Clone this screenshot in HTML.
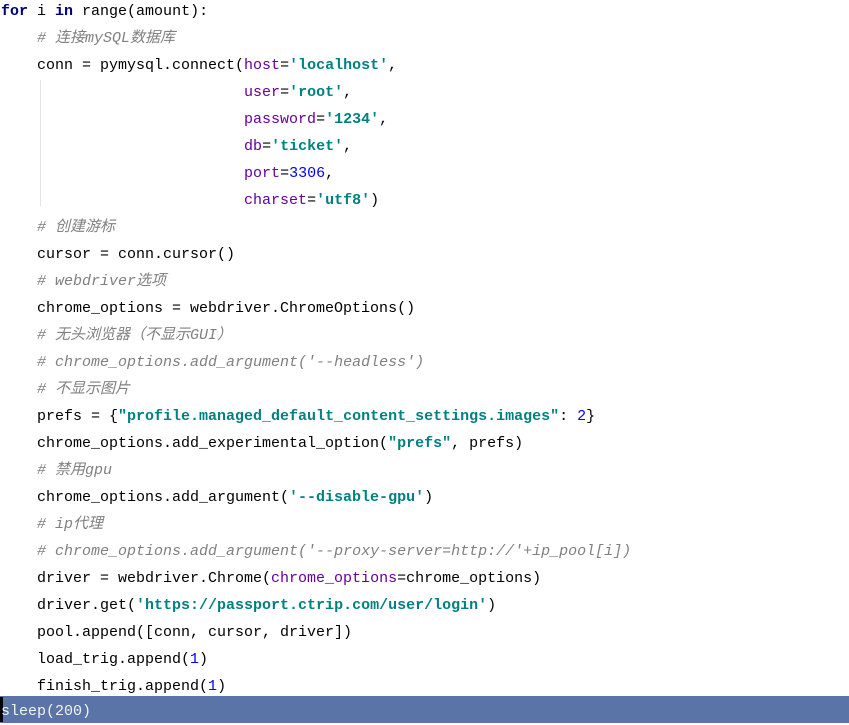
<!DOCTYPE html>
<html><head><meta charset="utf-8"><style>
html,body{margin:0;padding:0;background:#fff;width:849px;height:723px;overflow:hidden}
.c{position:absolute;left:1px;top:-2px;font-family:"Liberation Mono","Noto Sans CJK SC",monospace;font-size:15px;color:#000}
.l{height:27px;line-height:27px;white-space:pre}
.k{color:#000080;font-weight:bold}
.s{color:#008080;font-weight:bold}
.p{color:#660099}
.n{color:#0000ff}
.m{color:#808080;font-style:italic}
.bar{position:absolute;left:0;top:696px;width:849px;height:27px;background:#5a74a8}
.guide{position:absolute;left:40px;top:80px;width:1px;height:126px;background:#e4e4e4}
.cur{position:absolute;left:0;top:697px;width:3px;height:25px;background:#000}
</style></head><body>
<div class="guide"></div>
<div class="bar"></div>
<div class="cur"></div>
<div class="c">
<div class="l"><span class="k">for</span> i <span class="k">in</span> range(amount):</div>
<div class="l">    <span class="m"># 连接mySQL数据库</span></div>
<div class="l">    conn = pymysql.connect(<span class="p">host</span>=<span class="s">'localhost'</span>,</div>
<div class="l">                           <span class="p">user</span>=<span class="s">'root'</span>,</div>
<div class="l">                           <span class="p">password</span>=<span class="s">'1234'</span>,</div>
<div class="l">                           <span class="p">db</span>=<span class="s">'ticket'</span>,</div>
<div class="l">                           <span class="p">port</span>=<span class="n">3306</span>,</div>
<div class="l">                           <span class="p">charset</span>=<span class="s">'utf8'</span>)</div>
<div class="l">    <span class="m"># 创建游标</span></div>
<div class="l">    cursor = conn.cursor()</div>
<div class="l">    <span class="m"># webdriver选项</span></div>
<div class="l">    chrome_options = webdriver.ChromeOptions()</div>
<div class="l">    <span class="m"># 无头浏览器（不显示GUI）</span></div>
<div class="l">    <span class="m"># chrome_options.add_argument('--headless')</span></div>
<div class="l">    <span class="m"># 不显示图片</span></div>
<div class="l">    prefs = {<span class="s">"profile.managed_default_content_settings.images"</span>: <span class="n">2</span>}</div>
<div class="l">    chrome_options.add_experimental_option(<span class="s">"prefs"</span>, prefs)</div>
<div class="l">    <span class="m"># 禁用gpu</span></div>
<div class="l">    chrome_options.add_argument(<span class="s">'--disable-gpu'</span>)</div>
<div class="l">    <span class="m"># ip代理</span></div>
<div class="l">    <span class="m"># chrome_options.add_argument('--proxy-server=http://'+ip_pool[i])</span></div>
<div class="l">    driver = webdriver.Chrome(<span class="p">chrome_options</span>=chrome_options)</div>
<div class="l">    driver.get(<span class="s">'https://passport.ctrip.com/user/login'</span>)</div>
<div class="l">    pool.append([conn, cursor, driver])</div>
<div class="l">    load_trig.append(<span class="n">1</span>)</div>
<div class="l">    finish_trig.append(<span class="n">1</span>)</div>
</div>
<div class="c" style="top:698px;left:1px"><div class="l" style="color:#f2f2f2">sleep(200)</div></div>
</body></html>
